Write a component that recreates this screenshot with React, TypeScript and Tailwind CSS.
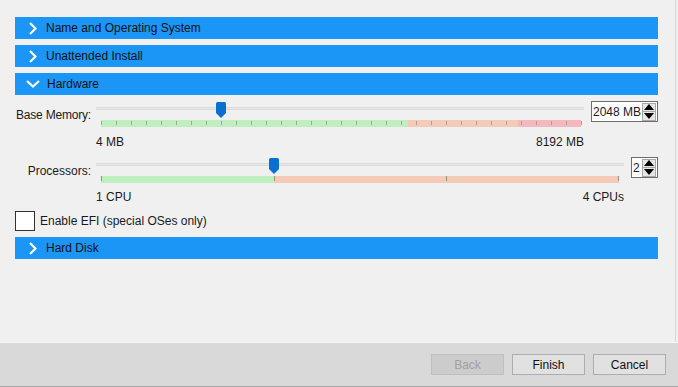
import React from "react";

const font = { fontFamily: '"Liberation Sans", Arial, sans-serif' };

const Chevron = ({ open }: { open: boolean }) =>
  open ? (
    <svg width="14" height="8" viewBox="0 0 14 8" className="ml-[11px] mr-[7px]">
      <path d="M1 1 L7 6.5 L13 1" stroke="white" strokeWidth="2.2" fill="none" />
    </svg>
  ) : (
    <svg width="8" height="13" viewBox="0 0 8 13" className="ml-[14px] mr-[9px]">
      <path d="M1 1 L6.5 6.5 L1 12" stroke="white" strokeWidth="2.2" fill="none" />
    </svg>
  );

const Section = ({ title, open = false }: { title: string; open?: boolean }) => (
  <div className="h-[22px] bg-[#1b96f6] flex items-center text-[12px] text-[#111]">
    <Chevron open={open} />
    <span>{title}</span>
  </div>
);

const Thumb = () => (
  <svg width="10" height="16" viewBox="0 0 10 16">
    <path d="M1.5 0 H8.5 Q10 0 10 1.5 V11 L5 16 L0 11 V1.5 Q0 0 1.5 0 Z" fill="#0b6fcf" />
  </svg>
);

type Seg = { to: number; color: string };

const Slider = ({
  value,
  segs,
  ticks,
  tickClass,
  rightInset,
}: {
  value: number;
  segs: Seg[];
  ticks: number[];
  tickClass: string;
  rightInset: string;
}) => {
  let from = 0;
  return (
    <div className="relative h-[27px]">
      <div className="absolute left-0 right-0 top-[6px] h-[3px] bg-[#e9e9e9] border-y border-[#d9d9d9]" />
      <div className={`absolute left-[5px] ${rightInset} top-[19px] h-[7px] flex`}>
        {segs.map((s, i) => {
          const w = s.to - from;
          from = s.to;
          return <div key={i} className="h-full" style={{ width: `${w * 100}%`, background: s.color }} />;
        })}
        {ticks.map((t, i) => (
          <div key={"t" + i} className={`absolute w-px ${tickClass}`} style={{ left: `${t * 100}%` }} />
        ))}
      </div>
      <div className={`absolute left-[5px] ${rightInset} top-[1px] h-[16px]`}>
        <div className="absolute -translate-x-1/2" style={{ left: `${value * 100}%` }}>
          <Thumb />
        </div>
      </div>
    </div>
  );
};

const Spin = ({ text, w }: { text: string; w: string }) => (
  <div className={`${w} h-[21px] bg-white border border-[#6e6e6e] flex items-center justify-between pl-[1px] pr-[1px] text-[12px] whitespace-nowrap`}>
    <span>{text}</span>
    <div className="flex flex-col shrink-0 w-[14px] h-[18px] border border-[#a8a8a8] bg-[#e6e6e6]">
      <div className="flex-1 flex items-center justify-center border-b border-[#a8a8a8]">
        <svg width="10" height="6" viewBox="0 0 10 6"><path d="M0 6 L5 0 L10 6 Z" fill="#000" /></svg>
      </div>
      <div className="flex-1 flex items-center justify-center">
        <svg width="10" height="6" viewBox="0 0 10 6"><path d="M0 0 L5 6 L10 0 Z" fill="#000" /></svg>
      </div>
    </div>
  </div>
);

const memTicks = Array.from({ length: 33 }, (_, i) => i / 32);

export default function App() {
  return (
    <div className="w-[678px] h-[387px] bg-[#f0f0f0] flex flex-col overflow-hidden text-[#1a1a1a]" style={font}>
      <div className="flex-1 w-[676px] border-r border-[#d6d6d6] pt-[17px] pl-[15px] pr-[17px]">
        <div className="flex flex-col gap-[6px]">
          <Section title="Name and Operating System" />
          <Section title="Unattended Install" />
          <Section title="Hardware" open />
        </div>

        {/* memory */}
        <div className="flex mt-[6px] text-[12px]">
          <div className="w-[76px] shrink-0 flex justify-end whitespace-nowrap pt-[5px]">
            <span className="tracking-[-0.2px]">Base Memory:</span>
          </div>
          <div className="flex-1 ml-[5px]">
            <Slider
              value={(2048 - 4) / (8192 - 4)}
              segs={[
                { to: 0.64, color: "#bfeebf" },
                { to: 0.868, color: "#f3cbb6" },
                { to: 1, color: "#f3b9bd" },
              ]}
              ticks={memTicks}
              tickClass="top-[1px] h-[4px] bg-[#a3a3a3]"
              rightInset="right-[3px]"
            />
            <div className="flex justify-between mt-[7px] leading-[14px]">
              <span>4 MB</span>
              <span>8192 MB</span>
            </div>
          </div>
          <div className="ml-[7px] shrink-0">
            <Spin text="2048 MB" w="w-[67px]" />
          </div>
        </div>

        {/* processors */}
        <div className="flex mt-[8px] text-[12px]">
          <div className="w-[76px] shrink-0 flex justify-end whitespace-nowrap pt-[5px]">
            <span>Processors:</span>
          </div>
          <div className="flex-1 ml-[5px]">
            <Slider
              value={1 / 3}
              segs={[
                { to: 1 / 3, color: "#bfeebf" },
                { to: 1, color: "#f3cbb6" },
              ]}
              ticks={[0, 1 / 3, 2 / 3, 0.998]}
              tickClass="top-0 h-[5px] bg-[#8f8f8f]"
              rightInset="right-[5px]"
            />
            <div className="flex justify-between mt-[6px] leading-[14px]">
              <span>1 CPU</span>
              <span>4 CPUs</span>
            </div>
          </div>
          <div className="ml-[7px] shrink-0">
            <Spin text="2" w="w-[27px]" />
          </div>
        </div>

        <label className="flex items-center gap-[5px] mt-[7px] text-[12px]">
          <span className="w-[20px] h-[20px] bg-white border border-[#333]" />
          <span>Enable EFI (special OSes only)</span>
        </label>

        <div className="mt-[6px]">
          <Section title="Hard Disk" />
        </div>
      </div>

      <div className="h-[45px] bg-[#d9d9d9] border-t border-[#f6f6f6] border-b border-b-[#a6a6a6] flex items-center justify-end gap-[8px] pr-[12px] text-[12px]">
        <button className="w-[73px] h-[21px] bg-[#cccccc] border border-[#bfbfbf] text-[#a0a0a0]">Back</button>
        <button className="w-[73px] h-[21px] bg-[#e1e1e1] border border-[#adadad] text-[#111]">Finish</button>
        <button className="w-[73px] h-[21px] bg-[#e1e1e1] border border-[#adadad] text-[#111]">Cancel</button>
      </div>
    </div>
  );
}
